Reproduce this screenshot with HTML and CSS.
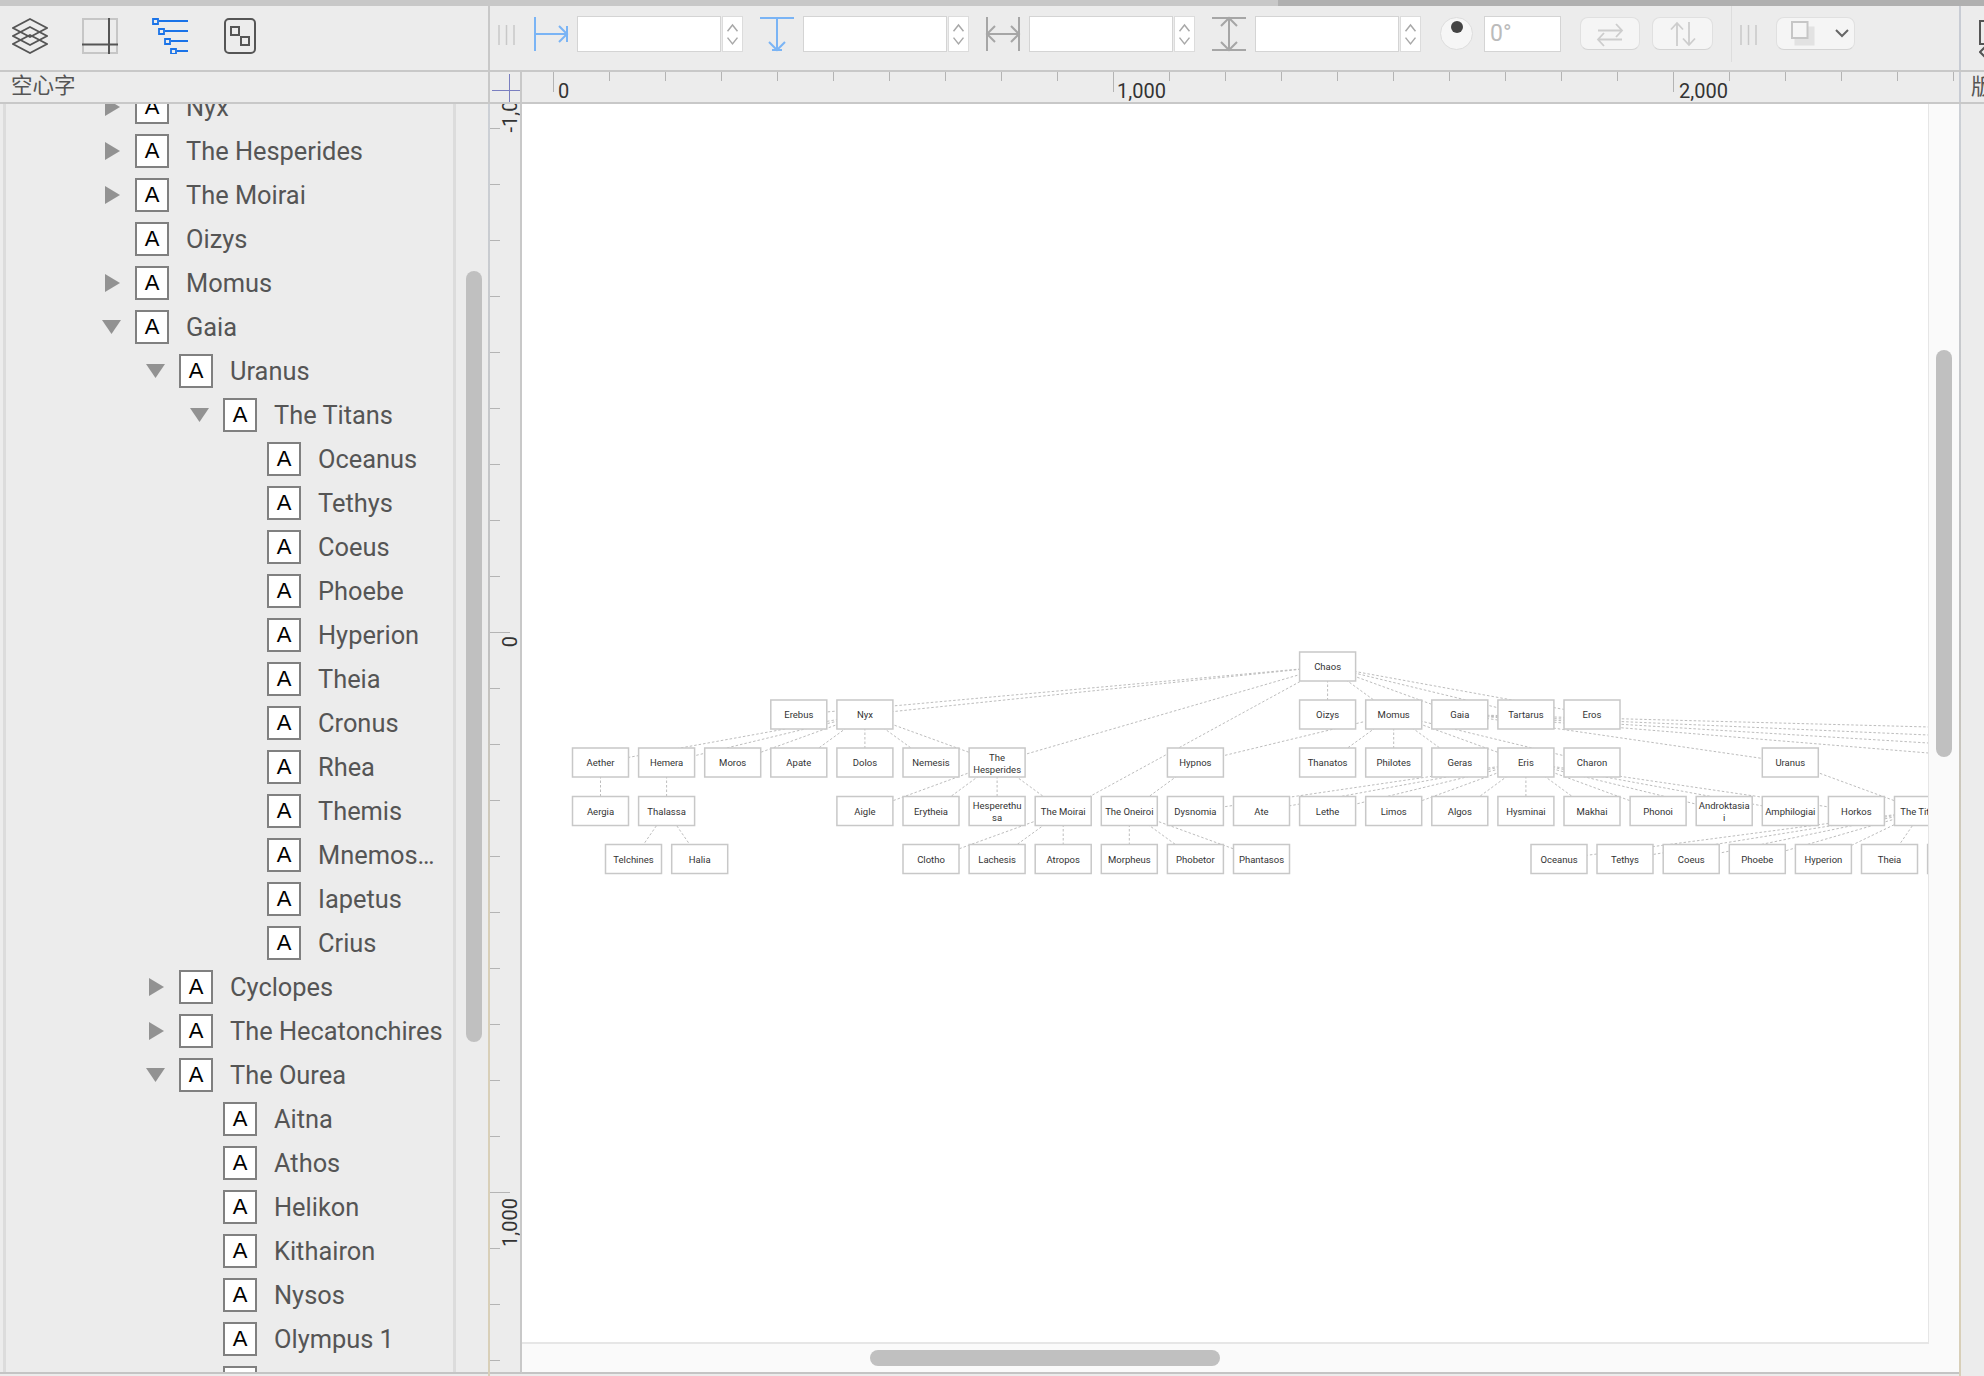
FILE: index.html
```html
<!DOCTYPE html>
<html lang="en">
<head>
    <meta charset="UTF-8">
    <title>Outline</title>
    <link rel="stylesheet" href="styles.css">
</head>
<body>
    <svg class="defs" width="0" height="0">
        <symbol id="stepper" viewBox="0 0 21 36">
            <path d="M5 15 L10.5 8 L16 15 M5 22 L10.5 29 L16 22" fill="none" stroke="#a8a8a8" stroke-width="1.6"/>
        </symbol>
        <symbol id="grip" viewBox="0 0 18 20">
            <path d="M1 0V20M8.5 0V20M16 0V20" fill="none" stroke="#c8c8c8" stroke-width="1.5"/>
        </symbol>
    </svg>

    <div class="title-strip"><div class="title-strip-rest"></div></div>

    <div class="toolbar">
        <div class="tool-tabs">
            <svg class="tab-icon" viewBox="0 0 36 36" fill="none" stroke="#555" stroke-width="1.8">
                <path d="M18 1L35 10L18 19L1 10Z"/>
                <path d="M18 9L35 18L18 27L1 18Z"/>
                <path d="M18 17L35 26L18 35L1 26Z"/>
            </svg>
            <svg class="tab-icon" viewBox="0 0 36 36" fill="none">
                <rect x="1" y="1" width="34" height="34" stroke="#c6c6c6" stroke-width="2"/>
                <path d="M27 0V36M0 26.5H36" stroke="#555" stroke-width="2"/>
            </svg>
            <svg class="tab-icon" viewBox="0 0 36 36" fill="none" stroke="#1a73e8">
                <path d="M7 3H36M13 13H36M19 23H36M25 33H36" stroke-width="2"/>
                <path d="M1 1H6V6H1ZM7 11H12V16H7ZM13 21H18V26H13ZM19 31H24V36H19Z" stroke-width="1.8"/>
            </svg>
            <svg class="tab-icon" viewBox="0 0 36 36" fill="none" stroke="#555" stroke-width="2">
                <rect x="3" y="1" width="30" height="34" rx="4"/>
                <rect x="9" y="9" width="8" height="8"/>
                <rect x="19" y="19" width="8" height="8"/>
            </svg>
        </div>

        <div class="tool-options">
            <svg class="grip"><use href="#grip"/></svg>

            <div class="metric first">
                <svg class="metric-icon" viewBox="0 0 36 36" fill="none" stroke="#7ab4f5" stroke-width="2">
                    <path d="M2 1V35M2 18H34M34 10V26M26 10L34 18L26 26"/>
                </svg>
                <div class="metric-input"></div>
                <svg class="stepper"><use href="#stepper"/></svg>
            </div>
            <div class="metric">
                <svg class="metric-icon" viewBox="0 0 36 36" fill="none" stroke="#7ab4f5" stroke-width="2">
                    <path d="M1 2H35M18 2V34M13 34H23M10 26L18 34L26 26"/>
                </svg>
                <div class="metric-input"></div>
                <svg class="stepper"><use href="#stepper"/></svg>
            </div>
            <div class="metric">
                <svg class="metric-icon" viewBox="0 0 36 36" fill="none" stroke="#a6a6a6" stroke-width="2">
                    <path d="M2 1V35M34 1V35M2 18H34M10 10L2 18L10 26M26 10L34 18L26 26"/>
                </svg>
                <div class="metric-input"></div>
                <svg class="stepper"><use href="#stepper"/></svg>
            </div>
            <div class="metric">
                <svg class="metric-icon" viewBox="0 0 36 36" fill="none" stroke="#a6a6a6" stroke-width="2">
                    <path d="M1 2H35M1 34H35M18 2V34M10 10L18 2L26 10M10 26L18 34L26 26"/>
                </svg>
                <div class="metric-input"></div>
                <svg class="stepper"><use href="#stepper"/></svg>
            </div>

            <div class="dial"><span class="dial-dot"></span></div>
            <div class="angle-input">0°</div>

            <button class="flip-btn first-flip">
                <svg width="34" height="26" viewBox="0 0 34 26" fill="none" stroke="#cdcdcd" stroke-width="1.8">
                    <path d="M5 9.500H29M23 3L29 9.500L23 16M29 18.500H5M11 12L5 18.500L11 25"/>
                </svg>
            </button>
            <button class="flip-btn second-flip">
                <svg width="34" height="26" viewBox="0 0 34 26" fill="none" stroke="#cdcdcd" stroke-width="1.8">
                    <path d="M11 25V2M5 8.500L11 2L17 8.500M23 1V24M17 17.500L23 24L29 17.500"/>
                </svg>
            </button>

            <div class="tool-sep"></div>
            <svg class="grip after-sep"><use href="#grip"/></svg>

            <div class="shape-select">
                <svg width="26" height="26" viewBox="0 0 26 26">
                    <rect x="3.500" y="5.500" width="20" height="19" fill="#e2e2e2"/>
                    <rect x="1" y="1" width="15.500" height="16" fill="#f5f5f5" stroke="#c6c6c6" stroke-width="2"/>
                </svg>
                <svg class="shape-chevron" width="14" height="9" viewBox="0 0 14 9" fill="none" stroke="#666" stroke-width="2">
                    <path d="M1 1L7 7L13 1"/>
                </svg>
            </div>
        </div>

        <div class="side-tools">
            <svg width="5" height="44" viewBox="0 0 5 44" fill="none" stroke="#555" stroke-width="2">
                <path d="M6 1H1V24H6M6 27L1 32L6 37"/>
            </svg>
        </div>
    </div>

    <div class="subbar">
        <div class="sub-title">空心字</div>
        <div class="ruler-corner">
            <span class="cross-h"></span>
            <span class="cross-v"></span>
        </div>
        <div class="ruler-h">
            <span class="ticks-h"></span>
            <span class="ticks-h-major"></span>
            <span class="ruler-h-label label-0">0</span>
            <span class="ruler-h-label label-1000">1,000</span>
            <span class="ruler-h-label label-2000">2,000</span>
        </div>
        <div class="side-title">版</div>
    </div>

    <div class="workspace">
        <div class="tree-panel">
            <div class="tree-inner">
                <ul class="tree">
                    <li class="row"><span class="twist closed"></span><span class="type-box">A</span><span class="name">Nyx</span></li>
                    <li class="row"><span class="twist closed"></span><span class="type-box">A</span><span class="name">The Hesperides</span></li>
                    <li class="row"><span class="twist closed"></span><span class="type-box">A</span><span class="name">The Moirai</span></li>
                    <li class="row"><span class="twist"></span><span class="type-box">A</span><span class="name">Oizys</span></li>
                    <li class="row"><span class="twist closed"></span><span class="type-box">A</span><span class="name">Momus</span></li>
                    <li class="row"><span class="twist open"></span><span class="type-box">A</span><span class="name">Gaia</span></li>
                    <li class="row depth-1"><span class="twist open"></span><span class="type-box">A</span><span class="name">Uranus</span></li>
                    <li class="row depth-2"><span class="twist open"></span><span class="type-box">A</span><span class="name">The Titans</span></li>
                    <li class="row depth-3"><span class="twist"></span><span class="type-box">A</span><span class="name">Oceanus</span></li>
                    <li class="row depth-3"><span class="twist"></span><span class="type-box">A</span><span class="name">Tethys</span></li>
                    <li class="row depth-3"><span class="twist"></span><span class="type-box">A</span><span class="name">Coeus</span></li>
                    <li class="row depth-3"><span class="twist"></span><span class="type-box">A</span><span class="name">Phoebe</span></li>
                    <li class="row depth-3"><span class="twist"></span><span class="type-box">A</span><span class="name">Hyperion</span></li>
                    <li class="row depth-3"><span class="twist"></span><span class="type-box">A</span><span class="name">Theia</span></li>
                    <li class="row depth-3"><span class="twist"></span><span class="type-box">A</span><span class="name">Cronus</span></li>
                    <li class="row depth-3"><span class="twist"></span><span class="type-box">A</span><span class="name">Rhea</span></li>
                    <li class="row depth-3"><span class="twist"></span><span class="type-box">A</span><span class="name">Themis</span></li>
                    <li class="row depth-3"><span class="twist"></span><span class="type-box">A</span><span class="name">Mnemos…</span></li>
                    <li class="row depth-3"><span class="twist"></span><span class="type-box">A</span><span class="name">Iapetus</span></li>
                    <li class="row depth-3"><span class="twist"></span><span class="type-box">A</span><span class="name">Crius</span></li>
                    <li class="row depth-1"><span class="twist closed"></span><span class="type-box">A</span><span class="name">Cyclopes</span></li>
                    <li class="row depth-1"><span class="twist closed"></span><span class="type-box">A</span><span class="name">The Hecatonchires</span></li>
                    <li class="row depth-1"><span class="twist open"></span><span class="type-box">A</span><span class="name">The Ourea</span></li>
                    <li class="row depth-2"><span class="twist"></span><span class="type-box">A</span><span class="name">Aitna</span></li>
                    <li class="row depth-2"><span class="twist"></span><span class="type-box">A</span><span class="name">Athos</span></li>
                    <li class="row depth-2"><span class="twist"></span><span class="type-box">A</span><span class="name">Helikon</span></li>
                    <li class="row depth-2"><span class="twist"></span><span class="type-box">A</span><span class="name">Kithairon</span></li>
                    <li class="row depth-2"><span class="twist"></span><span class="type-box">A</span><span class="name">Nysos</span></li>
                    <li class="row depth-2"><span class="twist"></span><span class="type-box">A</span><span class="name">Olympus 1</span></li>
                    <li class="row depth-2"><span class="twist"></span><span class="type-box"></span><span class="name"></span></li>
                </ul>
            </div>
            <div class="tree-scroll"><span class="tree-thumb"></span></div>
        </div>

        <div class="guide"></div>

        <div class="ruler-v">
            <span class="ticks-v"></span>
            <span class="ticks-v-major"></span>
            <span class="ruler-v-label label-minus">-1,000</span>
            <span class="ruler-v-label label-zero">0</span>
            <span class="ruler-v-label label-plus">1,000</span>
        </div>

        <div class="canvas-area">
            <div class="canvas-row">
                <div class="canvas">
                    <svg class="diagram" viewBox="522 104 1406 1239" width="1406" height="1239">
                        <g class="edges">
                            <!-- Chaos -->
                            <line x1="1327.6" y1="666.5" x2="798.8" y2="714.5"/>
                            <line x1="1327.6" y1="666.5" x2="864.9" y2="714.5"/>
                            <line x1="1327.6" y1="666.5" x2="997.1" y2="762.5"/>
                            <line x1="1327.6" y1="666.5" x2="1063.2" y2="811"/>
                            <line x1="1327.6" y1="666.5" x2="1327.6" y2="714.5"/>
                            <line x1="1327.6" y1="666.5" x2="1393.7" y2="714.5"/>
                            <line x1="1327.6" y1="666.5" x2="1459.8" y2="714.5"/>
                            <line x1="1327.6" y1="666.5" x2="1525.9" y2="714.5"/>
                            <line x1="1327.6" y1="666.5" x2="1592" y2="714.5"/>
                            <!-- Nyx -->
                            <line x1="864.9" y1="714.5" x2="600.5" y2="762.5"/>
                            <line x1="864.9" y1="714.5" x2="666.6" y2="762.5"/>
                            <line x1="864.9" y1="714.5" x2="732.7" y2="762.5"/>
                            <line x1="864.9" y1="714.5" x2="798.8" y2="762.5"/>
                            <line x1="864.9" y1="714.5" x2="864.9" y2="762.5"/>
                            <line x1="864.9" y1="714.5" x2="931" y2="762.5"/>
                            <line x1="864.9" y1="714.5" x2="997.1" y2="762.5"/>
                            <line x1="600.5" y1="762.5" x2="600.5" y2="811"/>
                            <line x1="666.6" y1="762.5" x2="666.6" y2="811"/>
                            <line x1="666.6" y1="811" x2="633.5" y2="859"/>
                            <line x1="666.6" y1="811" x2="699.7" y2="859"/>
                            <!-- Hesperides, Moirai, Oneiroi -->
                            <line x1="997.1" y1="762.5" x2="864.9" y2="811"/>
                            <line x1="997.1" y1="762.5" x2="931" y2="811"/>
                            <line x1="997.1" y1="762.5" x2="997.1" y2="811"/>
                            <line x1="997.1" y1="762.5" x2="1063.2" y2="811"/>
                            <line x1="1063.2" y1="811" x2="931" y2="859"/>
                            <line x1="1063.2" y1="811" x2="997.1" y2="859"/>
                            <line x1="1063.2" y1="811" x2="1063.2" y2="859"/>
                            <line x1="1195.4" y1="762.5" x2="1129.3" y2="811"/>
                            <line x1="1129.3" y1="811" x2="1129.3" y2="859"/>
                            <line x1="1129.3" y1="811" x2="1195.4" y2="859"/>
                            <line x1="1129.3" y1="811" x2="1261.5" y2="859"/>
                            <!-- Momus -->
                            <line x1="1393.7" y1="714.5" x2="1195.4" y2="762.5"/>
                            <line x1="1393.7" y1="714.5" x2="1327.6" y2="762.5"/>
                            <line x1="1393.7" y1="714.5" x2="1393.7" y2="762.5"/>
                            <line x1="1393.7" y1="714.5" x2="1459.8" y2="762.5"/>
                            <line x1="1393.7" y1="714.5" x2="1525.9" y2="762.5"/>
                            <line x1="1393.7" y1="714.5" x2="1592" y2="762.5"/>
                            <!-- Eris -->
                            <line x1="1525.9" y1="762.5" x2="1195.4" y2="811"/>
                            <line x1="1525.9" y1="762.5" x2="1261.5" y2="811"/>
                            <line x1="1525.9" y1="762.5" x2="1327.6" y2="811"/>
                            <line x1="1525.9" y1="762.5" x2="1393.7" y2="811"/>
                            <line x1="1525.9" y1="762.5" x2="1459.8" y2="811"/>
                            <line x1="1525.9" y1="762.5" x2="1525.9" y2="811"/>
                            <line x1="1525.9" y1="762.5" x2="1592" y2="811"/>
                            <line x1="1525.9" y1="762.5" x2="1658.1" y2="811"/>
                            <line x1="1525.9" y1="762.5" x2="1724.2" y2="811"/>
                            <line x1="1525.9" y1="762.5" x2="1790.3" y2="811"/>
                            <line x1="1525.9" y1="762.5" x2="1856.4" y2="811"/>
                            <!-- Gaia -->
                            <line x1="1459.8" y1="714.5" x2="1790.3" y2="762.5"/>
                            <line x1="1459.8" y1="714.5" x2="2044" y2="762.5"/>
                            <line x1="1459.8" y1="714.5" x2="2249" y2="762.5"/>
                            <line x1="1459.8" y1="714.5" x2="2557" y2="762.5"/>
                            <line x1="1459.8" y1="714.5" x2="3263" y2="762.5"/>
                            <!-- Uranus, Titans -->
                            <line x1="1790.3" y1="762.5" x2="1922.5" y2="811"/>
                            <line x1="1922.5" y1="811" x2="1559" y2="859"/>
                            <line x1="1922.5" y1="811" x2="1625" y2="859"/>
                            <line x1="1922.5" y1="811" x2="1691.2" y2="859"/>
                            <line x1="1922.5" y1="811" x2="1757.3" y2="859"/>
                            <line x1="1922.5" y1="811" x2="1823.4" y2="859"/>
                            <line x1="1922.5" y1="811" x2="1889.5" y2="859"/>
                            <line x1="1922.5" y1="811" x2="1955.6" y2="859"/>
                        </g>
                        <g class="node">
                            <rect x="1299.6" y="652" width="56" height="29"/><text x="1327.6" y="670">Chaos</text>
                        </g>
                        <g class="node">
                            <rect x="770.8" y="700" width="56" height="29"/><text x="798.8" y="718">Erebus</text>
                            <rect x="836.9" y="700" width="56" height="29"/><text x="864.9" y="718">Nyx</text>
                            <rect x="1299.6" y="700" width="56" height="29"/><text x="1327.6" y="718">Oizys</text>
                            <rect x="1365.7" y="700" width="56" height="29"/><text x="1393.7" y="718">Momus</text>
                            <rect x="1431.8" y="700" width="56" height="29"/><text x="1459.8" y="718">Gaia</text>
                            <rect x="1497.9" y="700" width="56" height="29"/><text x="1525.9" y="718">Tartarus</text>
                            <rect x="1564" y="700" width="56" height="29"/><text x="1592" y="718">Eros</text>
                        </g>
                        <g class="node">
                            <rect x="572.5" y="748" width="56" height="29"/><text x="600.5" y="766">Aether</text>
                            <rect x="638.6" y="748" width="56" height="29"/><text x="666.6" y="766">Hemera</text>
                            <rect x="704.7" y="748" width="56" height="29"/><text x="732.7" y="766">Moros</text>
                            <rect x="770.8" y="748" width="56" height="29"/><text x="798.8" y="766">Apate</text>
                            <rect x="836.9" y="748" width="56" height="29"/><text x="864.9" y="766">Dolos</text>
                            <rect x="903" y="748" width="56" height="29"/><text x="931" y="766">Nemesis</text>
                            <rect x="969.1" y="748" width="56" height="29"/><text x="997.1" y="761">The</text><text x="997.1" y="773">Hesperides</text>
                            <rect x="1167.4" y="748" width="56" height="29"/><text x="1195.4" y="766">Hypnos</text>
                            <rect x="1299.6" y="748" width="56" height="29"/><text x="1327.6" y="766">Thanatos</text>
                            <rect x="1365.7" y="748" width="56" height="29"/><text x="1393.7" y="766">Philotes</text>
                            <rect x="1431.8" y="748" width="56" height="29"/><text x="1459.8" y="766">Geras</text>
                            <rect x="1497.9" y="748" width="56" height="29"/><text x="1525.9" y="766">Eris</text>
                            <rect x="1564" y="748" width="56" height="29"/><text x="1592" y="766">Charon</text>
                            <rect x="1762.3" y="748" width="56" height="29"/><text x="1790.3" y="766">Uranus</text>
                        </g>
                        <g class="node">
                            <rect x="572.5" y="796.500" width="56" height="29"/><text x="600.5" y="815">Aergia</text>
                            <rect x="638.6" y="796.500" width="56" height="29"/><text x="666.6" y="815">Thalassa</text>
                            <rect x="836.9" y="796.500" width="56" height="29"/><text x="864.9" y="815">Aigle</text>
                            <rect x="903" y="796.500" width="56" height="29"/><text x="931" y="815">Erytheia</text>
                            <rect x="969.1" y="796.500" width="56" height="29"/><text x="997.1" y="809">Hesperethu</text><text x="997.1" y="821">sa</text>
                            <rect x="1035.2" y="796.500" width="56" height="29"/><text x="1063.2" y="815">The Moirai</text>
                            <rect x="1101.3" y="796.500" width="56" height="29"/><text x="1129.3" y="815">The Oneiroi</text>
                            <rect x="1167.4" y="796.500" width="56" height="29"/><text x="1195.4" y="815">Dysnomia</text>
                            <rect x="1233.5" y="796.500" width="56" height="29"/><text x="1261.5" y="815">Ate</text>
                            <rect x="1299.6" y="796.500" width="56" height="29"/><text x="1327.6" y="815">Lethe</text>
                            <rect x="1365.7" y="796.500" width="56" height="29"/><text x="1393.7" y="815">Limos</text>
                            <rect x="1431.8" y="796.500" width="56" height="29"/><text x="1459.8" y="815">Algos</text>
                            <rect x="1497.9" y="796.500" width="56" height="29"/><text x="1525.9" y="815">Hysminai</text>
                            <rect x="1564" y="796.500" width="56" height="29"/><text x="1592" y="815">Makhai</text>
                            <rect x="1630.1" y="796.500" width="56" height="29"/><text x="1658.1" y="815">Phonoi</text>
                            <rect x="1696.2" y="796.500" width="56" height="29"/><text x="1724.2" y="809">Androktasia</text><text x="1724.2" y="821">i</text>
                            <rect x="1762.3" y="796.500" width="56" height="29"/><text x="1790.3" y="815">Amphilogiai</text>
                            <rect x="1828.4" y="796.500" width="56" height="29"/><text x="1856.4" y="815">Horkos</text>
                            <rect x="1894.5" y="796.500" width="56" height="29"/><text x="1922.5" y="815">The Titans</text>
                        </g>
                        <g class="node">
                            <rect x="605.5" y="844.500" width="56" height="29"/><text x="633.5" y="863">Telchines</text>
                            <rect x="671.7" y="844.500" width="56" height="29"/><text x="699.7" y="863">Halia</text>
                            <rect x="903" y="844.500" width="56" height="29"/><text x="931" y="863">Clotho</text>
                            <rect x="969.1" y="844.500" width="56" height="29"/><text x="997.1" y="863">Lachesis</text>
                            <rect x="1035.2" y="844.500" width="56" height="29"/><text x="1063.2" y="863">Atropos</text>
                            <rect x="1101.3" y="844.500" width="56" height="29"/><text x="1129.3" y="863">Morpheus</text>
                            <rect x="1167.4" y="844.500" width="56" height="29"/><text x="1195.4" y="863">Phobetor</text>
                            <rect x="1233.5" y="844.500" width="56" height="29"/><text x="1261.5" y="863">Phantasos</text>
                            <rect x="1531" y="844.500" width="56" height="29"/><text x="1559" y="863">Oceanus</text>
                            <rect x="1597" y="844.500" width="56" height="29"/><text x="1625" y="863">Tethys</text>
                            <rect x="1663.2" y="844.500" width="56" height="29"/><text x="1691.2" y="863">Coeus</text>
                            <rect x="1729.3" y="844.500" width="56" height="29"/><text x="1757.3" y="863">Phoebe</text>
                            <rect x="1795.4" y="844.500" width="56" height="29"/><text x="1823.4" y="863">Hyperion</text>
                            <rect x="1861.5" y="844.500" width="56" height="29"/><text x="1889.5" y="863">Theia</text>
                            <rect x="1927.6" y="844.500" width="56" height="29"/>
                        </g>
                    </svg>
                </div>
                <div class="scroll-v"><span class="thumb-v"></span></div>
            </div>
            <div class="scroll-h"><span class="thumb-h"></span></div>
        </div>

        <div class="guide"></div>

        <div class="side-panel"></div>
    </div>
</body>
</html>
```

FILE: styles.css
```css
* {
    box-sizing: border-box;
}

html, body {
    margin: 0;
    height: 1376px;
    overflow: hidden;
}

body {
    font-family: Roboto, "Noto Sans CJK SC", sans-serif;
    background-color: #ececec;
    color: #555;
    display: flex;
    flex-direction: column;
}

.defs {
    position: absolute;
}

.title-strip {
    height: 6px;
    background-color: #c8c8c8;
    display: flex;
    justify-content: flex-end;
    flex-shrink: 0;
}

.title-strip-rest {
    width: 706px;
    background-color: #b0b0b0;
}

/* toolbar */
.toolbar {
    height: 66px;
    flex-shrink: 0;
    display: flex;
    border-bottom: 2px solid #c8c8c8;
}

.tool-tabs {
    width: 490px;
    flex-shrink: 0;
    display: flex;
    gap: 34px;
    padding: 12px 0 0 12px;
    border-right: 2px solid #c8c8c8;
}

.tab-icon {
    width: 36px;
    height: 36px;
    flex-shrink: 0;
}

.tool-options {
    flex: 1;
    display: flex;
    align-items: flex-start;
}

.grip {
    width: 18px;
    height: 20px;
    margin: 19px 0 0 8px;
    flex-shrink: 0;
}

.metric {
    width: 210px;
    display: flex;
    align-items: flex-start;
    margin: 10px 0 0 16px;
    flex-shrink: 0;
}

.metric.first {
    margin-left: 17px;
}

.metric-icon {
    width: 36px;
    height: 36px;
    margin-right: 8px;
}

.metric-input {
    width: 144px;
    height: 36px;
    background-color: #fff;
    border: 1.5px solid #d4d4d4;
}

.stepper {
    width: 21px;
    height: 36px;
    margin-left: 1px;
    background-color: #fff;
    border: 1.5px solid #dcdcdc;
}

.dial {
    width: 33px;
    height: 33px;
    margin: 11px 0 0 19px;
    background-color: #f6f6f6;
    border: 1px solid #ddd;
    border-radius: 50%;
    display: flex;
    justify-content: center;
    padding-top: 3px;
    flex-shrink: 0;
}

.dial-dot {
    width: 12px;
    height: 12px;
    background-color: #444;
    border-radius: 50%;
}

.angle-input {
    width: 77px;
    height: 36px;
    margin: 10px 0 0 11px;
    background-color: #fff;
    border: 1.5px solid #d4d4d4;
    color: #bbb;
    font-size: 23px;
    line-height: 34px;
    padding-left: 5px;
    flex-shrink: 0;
}

.flip-btn {
    height: 33px;
    margin-top: 11px;
    padding: 0;
    background-color: #f5f5f5;
    border: 1px solid #e0e0e0;
    border-bottom-color: #d4d4d4;
    border-radius: 8px;
    display: flex;
    align-items: center;
    justify-content: center;
    flex-shrink: 0;
}

.first-flip {
    width: 60px;
    margin-left: 19px;
}

.second-flip {
    width: 61px;
    margin-left: 12px;
}

.tool-sep {
    width: 1px;
    height: 56px;
    margin-left: 18px;
    background-color: #ddd;
    flex-shrink: 0;
}

.grip.after-sep {
    margin-left: 8px;
}

.shape-select {
    width: 79px;
    height: 33px;
    margin: 11px 0 0 18px;
    background-color: #f5f5f5;
    border: 1px solid #e0e0e0;
    border-bottom-color: #d4d4d4;
    border-radius: 8px;
    display: flex;
    align-items: center;
    padding-left: 14px;
    flex-shrink: 0;
}

.shape-chevron {
    margin-left: 18px;
}

.side-tools {
    width: 25px;
    flex-shrink: 0;
    border-left: 2px solid #c8ccd4;
    padding: 14px 0 0 18px;
}

/* second bar with the title and the top ruler */
.subbar {
    height: 32px;
    flex-shrink: 0;
    display: flex;
    border-bottom: 2px solid #c8c8c8;
}

.sub-title {
    width: 490px;
    flex-shrink: 0;
    padding-left: 11px;
    font-size: 21.5px;
    line-height: 28px;
    border-right: 2px solid #c8c8c8;
}

.ruler-corner {
    width: 32px;
    flex-shrink: 0;
    position: relative;
    border-right: 2px solid #c8c8c8;
}

.cross-h {
    position: absolute;
    left: 2px;
    right: 0;
    top: 18px;
    height: 1px;
    background-color: #7a7fc0;
}

.cross-v {
    position: absolute;
    left: 19px;
    top: 2px;
    bottom: 0;
    width: 1px;
    background-color: #7a7fc0;
}

.ruler-h {
    flex: 1;
    position: relative;
    overflow: hidden;
}

.ticks-h {
    position: absolute;
    left: 31px;
    right: 0;
    top: 0;
    height: 9px;
    background: repeating-linear-gradient(90deg, #b4b4b4 0 1px, transparent 1px 56px);
}

.ticks-h-major {
    position: absolute;
    left: 31px;
    right: 0;
    top: 0;
    height: 20px;
    background: repeating-linear-gradient(90deg, #b4b4b4 0 1px, transparent 1px 560px);
}

.ruler-h-label {
    position: absolute;
    top: 8px;
    font-size: 20px;
    line-height: 22px;
    color: #333;
}

.label-0 {
    left: 36px;
}

.label-1000 {
    left: 595px;
}

.label-2000 {
    left: 1157px;
}

.side-title {
    width: 25px;
    flex-shrink: 0;
    overflow: hidden;
    border-left: 2px solid #c8ccd4;
    padding-left: 10px;
    font-size: 21.5px;
    line-height: 30px;
    white-space: nowrap;
}

/* main row */
.workspace {
    flex: 1;
    display: flex;
    min-height: 0;
}

.guide {
    width: 2px;
    flex-shrink: 0;
    background: linear-gradient(180deg, #ccd0d6 0, #c0c0c0 43%, #d8cfb8 65%, #d8cfb8 100%);
}

.tree-panel {
    width: 488px;
    flex-shrink: 0;
    display: flex;
    border-bottom: 2px solid #c4c4c4;
    height: 1270px;
}

.tree-inner {
    width: 453px;
    flex-shrink: 0;
    overflow: hidden;
    border-left: 3px solid #dcdcdc;
    margin-left: 3px;
    border-right: 3px solid #dcdcdc;
}

.tree {
    list-style: none;
    margin: -19px 0 0 -6px;
    padding: 0;
}

.row {
    height: 44px;
    display: flex;
    align-items: center;
    padding-left: 102px;
    white-space: nowrap;
}

.depth-1 {
    padding-left: 146px;
}

.depth-2 {
    padding-left: 190px;
}

.depth-3 {
    padding-left: 234px;
}

.twist {
    width: 19px;
    height: 18px;
    margin-right: 14px;
    flex-shrink: 0;
}

.twist.closed {
    background-color: #929292;
    clip-path: polygon(3px 0, 18px 9px, 3px 18px);
}

.twist.open {
    background-color: #929292;
    clip-path: polygon(0 2px, 19px 2px, 9.5px 16px);
}

.type-box {
    width: 34px;
    height: 34px;
    flex-shrink: 0;
    background-color: #fff;
    border: 2px solid #808080;
    color: #000;
    font-family: "Liberation Sans", sans-serif;
    font-size: 22px;
    line-height: 30px;
    text-align: center;
}

.name {
    margin-left: 17px;
    font-size: 25.4px;
    line-height: 34px;
}

.tree-scroll {
    flex: 1;
    padding: 167px 0 0 10px;
}

.tree-thumb {
    display: block;
    width: 16px;
    height: 771px;
    background-color: #c0c0c0;
    border-radius: 8px;
}

/* left ruler */
.ruler-v {
    width: 32px;
    height: 1270px;
    flex-shrink: 0;
    position: relative;
    overflow: hidden;
    border-right: 2px solid #c8c8c8;
    border-bottom: 2px solid #c4c4c4;
}

.ticks-v {
    position: absolute;
    left: 0;
    top: 24px;
    bottom: 0;
    width: 10px;
    background: repeating-linear-gradient(180deg, #b4b4b4 0 1px, transparent 1px 56px);
}

.ticks-v-major {
    position: absolute;
    left: 0;
    top: 528px;
    bottom: 0;
    width: 20px;
    background: repeating-linear-gradient(180deg, #b4b4b4 0 1px, transparent 1px 560px);
}

.ruler-v-label {
    position: absolute;
    left: 10px;
    font-size: 20px;
    line-height: 20px;
    color: #333;
    writing-mode: vertical-rl;
    transform: rotate(180deg);
}

.label-minus {
    top: -26px;
}

.label-zero {
    top: 532px;
}

.label-plus {
    top: 1094px;
}

/* canvas */
.canvas-area {
    width: 1437px;
    flex-shrink: 0;
    height: 1270px;
    display: flex;
    flex-direction: column;
    background-color: #fafafa;
    border-bottom: 2px solid #c4c4c4;
}

.canvas-row {
    height: 1240px;
    flex-shrink: 0;
    display: flex;
}

.canvas {
    width: 1407px;
    flex-shrink: 0;
    background-color: #fff;
    border-right: 1.5px solid #e6e6e6;
    border-bottom: 2px solid #e6e6e6;
    overflow: hidden;
}

.diagram {
    display: block;
}

.edges line {
    stroke: #bdbdbd;
    stroke-width: 1;
    stroke-dasharray: 2.500 2;
}

.node rect {
    fill: #fff;
    stroke: #c8c8c8;
    stroke-width: 1.5;
}

.node text {
    fill: #333;
    font-family: Roboto, sans-serif;
    font-size: 9.5px;
    text-anchor: middle;
}

.scroll-v {
    flex: 1;
    padding: 246px 0 0 7px;
}

.thumb-v {
    display: block;
    width: 16px;
    height: 407px;
    background-color: #c0c0c0;
    border-radius: 8px;
}

.scroll-h {
    flex: 1;
    padding: 6px 0 0 348px;
}

.thumb-h {
    display: block;
    width: 350px;
    height: 16px;
    background-color: #c0c0c0;
    border-radius: 8px;
}

.side-panel {
    flex: 1;
}
```
